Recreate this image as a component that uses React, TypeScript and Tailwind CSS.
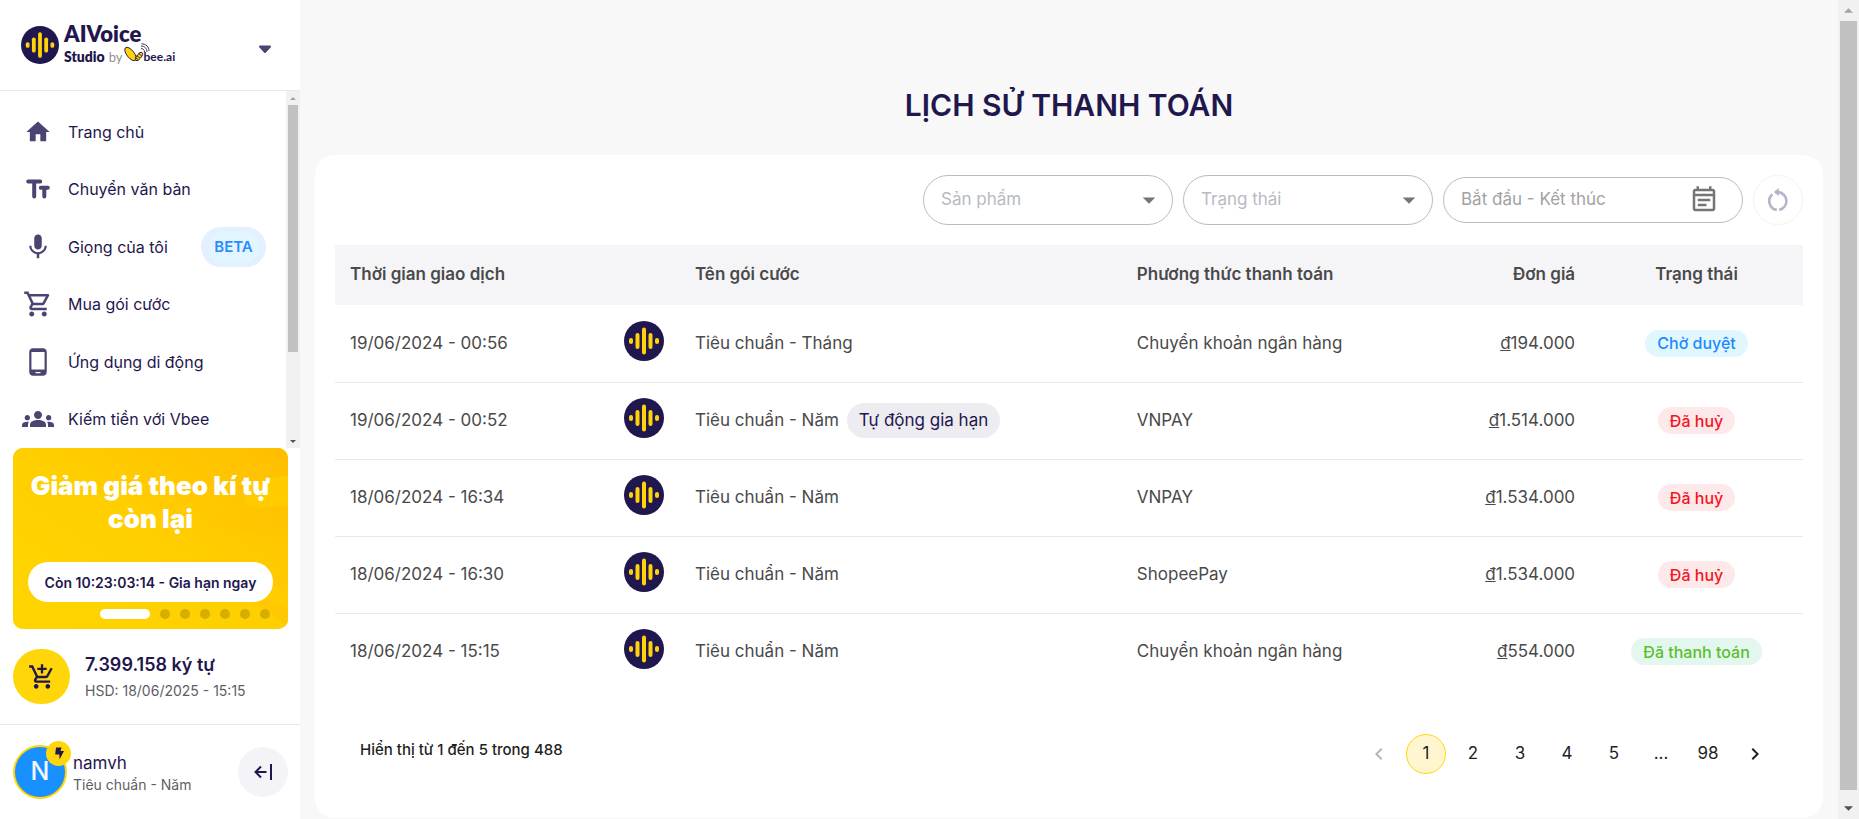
import React from 'react';
import {
  MdHome, MdMic, MdOutlineShoppingCart, MdPhoneAndroid, MdGroups, MdArrowDropDown,
  MdOutlineEventNote, MdChevronLeft, MdChevronRight, MdOutlineAddShoppingCart,
} from 'react-icons/md';

const SoundBadge = ({ className }: { className: string }) => (
  <svg viewBox="0 0 40 40" className={className} aria-hidden="true">
    <circle cx="20" cy="20" r="20" fill="#1f174e" />
    <g fill="#ffd20a">
      <rect x="5" y="17" width="4" height="6" rx="2" />
      <rect x="11.5" y="12" width="4" height="16" rx="2" />
      <rect x="18" y="6.5" width="4" height="27" rx="2" />
      <rect x="24.5" y="12" width="4" height="16" rx="2" />
      <rect x="31" y="17" width="4" height="6" rx="2" />
    </g>
  </svg>
);

const TextIcon = () => (
  <svg viewBox="0 0 24 20" className="h-5 w-6" fill="none" stroke="currentColor" strokeWidth="4" strokeLinecap="round" strokeLinejoin="round" aria-hidden="true">
    <path d="M2.200 2.500h12M8.200 2.500v15M14.800 8.800h7M18.300 8.800v8.700" />
  </svg>
);

const BeeMark = () => (
  <svg viewBox="0 0 26 20" className="mb-2 ml-px h-5 w-[26px] shrink-0" aria-hidden="true">
    <ellipse cx="6.5" cy="11" rx="3.7" ry="8" transform="rotate(-38 6.5 11)" fill="#ffd20a" stroke="#1f174e" strokeWidth=".9" />
    <ellipse cx="15" cy="13.500" rx="2.2" ry="5" transform="rotate(38 15 13.5)" fill="#ffd20a" stroke="#1f174e" strokeWidth=".9" />
    <path d="M14.5 10.500l3 2.200M12.700 12.600l3 2.200M11.500 14.700l2.600 1.900" stroke="#1f174e" strokeWidth=".9" />
    <path d="M17 5.500c2 0 3.500 1.500 3.500 3.500M17 3c3.500 0 6 2.500 6 6M17.500 .8C22 .8 25 4 25 8" fill="none" stroke="#1f174e" strokeWidth=".9" />
  </svg>
);

const menu = [
  { label: 'Trang chủ', icon: <MdHome className="size-7" /> },
  { label: 'Chuyển văn bản', icon: <TextIcon /> },
  { label: 'Giọng của tôi', icon: <MdMic className="size-[30px]" />, beta: true },
  { label: 'Mua gói cước', icon: <MdOutlineShoppingCart className="size-[30px]" /> },
  { label: 'Ứng dụng di động', icon: <MdPhoneAndroid className="size-[30px]" /> },
  { label: 'Kiếm tiền với Vbee', icon: <MdGroups className="size-8" /> },
];

const pending = 'bg-[#e0f8fd] text-[#1e88ff]';
const cancelled = 'bg-[#fde9ea] text-[#f5141d]';
const paid = 'bg-[#e4f7ee] text-[#58bf2d]';

const rows = [
  { time: '19/06/2024 - 00:56', plan: 'Tiêu chuẩn - Tháng', renew: false, method: 'Chuyển khoản ngân hàng', price: '194.000', status: 'Chờ duyệt', tone: pending },
  { time: '19/06/2024 - 00:52', plan: 'Tiêu chuẩn - Năm', renew: true, method: 'VNPAY', price: '1.514.000', status: 'Đã huỷ', tone: cancelled },
  { time: '18/06/2024 - 16:34', plan: 'Tiêu chuẩn - Năm', renew: false, method: 'VNPAY', price: '1.534.000', status: 'Đã huỷ', tone: cancelled },
  { time: '18/06/2024 - 16:30', plan: 'Tiêu chuẩn - Năm', renew: false, method: 'ShopeePay', price: '1.534.000', status: 'Đã huỷ', tone: cancelled },
  { time: '18/06/2024 - 15:15', plan: 'Tiêu chuẩn - Năm', renew: false, method: 'Chuyển khoản ngân hàng', price: '554.000', status: 'Đã thanh toán', tone: paid },
];

const Arrow = ({ down, className }: { down?: boolean; className: string }) => (
  <svg viewBox="0 0 10 5" className={className} fill="currentColor" aria-hidden="true">
    <path d={down ? 'M0 0h10L5 5z' : 'M0 5h10L5 0z'} />
  </svg>
);

function Sidebar() {
  return (
    <aside className="flex w-[300px] shrink-0 flex-col bg-white text-[#1f174e]">
      <div className="flex h-[91px] shrink-0 items-center justify-between border-b border-[#e9e9ec] pr-[28px] pl-[21px]">
        <a href="#" className="flex items-center gap-[5px]" aria-label="AIVoice Studio by Vbee.ai">
          <SoundBadge className="size-[38px]" />
          <span className="flex flex-col gap-1 font-['Lato','Liberation_Sans',sans-serif]">
            <span className="text-[22px] leading-[20px] font-extrabold">AIVoice</span>
            <span className="flex h-[18px] items-center text-[14px] leading-[18px] font-extrabold whitespace-nowrap">
              Studio
              <span className="ml-1 text-[13px] font-normal text-[#8f8f96]">by</span>
              <BeeMark />
              <span className="-ml-1.5 text-[12px] font-bold">bee.ai</span>
            </span>
          </span>
        </a>
        <button type="button" aria-label="Chọn sản phẩm" className="mt-2 text-[#4b4472]">
          <svg viewBox="0 0 14 9" className="h-[9px] w-[14px]" fill="currentColor" stroke="currentColor" strokeWidth="2" strokeLinejoin="round" aria-hidden="true"><path d="M2 1.500h10L7 7z" /></svg>
        </button>
      </div>

      <div className="flex min-h-0 flex-1">
        <nav className="flex min-w-0 flex-1 flex-col pt-3">
          {menu.map((m) => (
            <a key={m.label} href="#" className="flex min-h-12 flex-1 items-center pl-[22px]">
              <span className="flex w-8 justify-center text-[#4b4472]">{m.icon}</span>
              <span className="ml-[14px] text-[16px] whitespace-nowrap">{m.label}</span>
              {m.beta && (
                <span className="mr-5 ml-auto flex h-10 w-[65px] items-center justify-center rounded-full bg-[#e3f0ff] text-[15px] font-semibold text-[#2a8cff]">
                  <span className="flex h-8 w-[50px] items-center justify-center rounded-full bg-[#e3f6ff]">BETA</span>
                </span>
              )}
            </a>
          ))}
        </nav>
        <div className="flex w-[14px] flex-col items-center bg-[#f1f1f1]">
          <div className="flex h-[14px] items-center"><Arrow className="h-[3px] w-[6px] text-[#a3a3a3]" /></div>
          <div className="h-[247px] w-[10px] bg-[#c1c1c1]" />
          <div className="mt-auto flex h-[14px] items-center"><Arrow down className="h-[3px] w-[6px] text-[#505050]" /></div>
        </div>
      </div>

      <section className="relative mr-3 ml-[13px] flex h-[181px] shrink-0 flex-col items-center overflow-hidden rounded-[10px] bg-[#ffd000]">
        <svg viewBox="0 0 275 181" preserveAspectRatio="none" className="absolute inset-0 size-full" aria-hidden="true">
          <defs>
            <linearGradient id="warm" x1="0" y1="1" x2="1" y2="0">
              <stop offset="0" stopColor="#ffd500" /><stop offset=".5" stopColor="#ffcf00" /><stop offset="1" stopColor="#ffbe00" />
            </linearGradient>
            <linearGradient id="glow" x1="0" y1="0" x2="1" y2="0">
              <stop offset="0" stopColor="#ffc200" stopOpacity="0" /><stop offset="1" stopColor="#ffc200" />
            </linearGradient>
          </defs>
          <path d="M0 0h275v181H0z" fill="url(#warm)" />
          <path d="M275 27c-20 4-44 6-44 20 0 14 12 15 44 9z" fill="#ffcc00" />
          <path d="M180 60c30 24 60 28 95 28V56c-30 8-60 10-95 4z" fill="url(#glow)" opacity=".6" />
          <path d="M275 126c-26 4-42 8-60 14 20 2 40 0 60-4zM215 150c24 4 44 10 60 31v-20c-14-10-34-14-60-11z" fill="#ffc600" opacity=".7" />
        </svg>
        <h2 className="relative mt-[21px] px-3 text-center text-[26px] leading-[33px] font-black text-white">Giảm giá theo kí tự còn lại</h2>
        <button type="button" className="relative mt-[27px] h-10 w-[245px] rounded-full bg-white text-[14px] font-semibold whitespace-nowrap">Còn 10:23:03:14 - Gia hạn ngay</button>
        <div className="relative mt-[7px] mr-[18px] flex gap-[10px] self-end">
          <span className="h-[10px] w-[50px] rounded-full bg-white" />
          {[1, 2, 3, 4, 5, 6].map((n) => <span key={n} className="size-[10px] rounded-full bg-[#d6ae00]" />)}
        </div>
      </section>

      <div className="flex h-24 shrink-0 items-center border-b border-[#e9e9ec] pl-[13px]">
        <button type="button" aria-label="Mua thêm ký tự" className="flex h-[55px] w-[57px] items-center justify-center rounded-full bg-[#ffd60a]">
          <MdOutlineAddShoppingCart className="size-7" />
        </button>
        <div className="ml-[15px]">
          <div className="text-[18px] leading-7 font-semibold">7.399.158 ký tự</div>
          <div className="text-[14px] leading-6 text-[#5e5e66]">HSD: 18/06/2025 - 15:15</div>
        </div>
      </div>

      <div className="flex h-[94px] shrink-0 items-center pr-3 pl-[13px]">
        <div className="relative flex size-[54px] items-center justify-center rounded-full border-2 border-[#ffd60a] bg-[#1890ff] text-[25px] font-medium text-[#f4f6ff]">
          N
          <span className="absolute -top-1.5 -right-1.5 flex size-[25px] items-center justify-center rounded-full bg-[#ffd60a] text-[#1f174e]">
            <svg viewBox="0 0 10 13" className="h-[13px] w-[10px]" fill="currentColor" aria-hidden="true"><path d="M2 .5h5.500L6.500 4H10L5.500 12.500 5.300 7.500H1.200z" /></svg>
          </span>
        </div>
        <div className="ml-[6px] pt-1">
          <div className="text-[17px] leading-[22px]">namvh</div>
          <div className="text-[14px] leading-[22px] text-[#5e5e66]">Tiêu chuẩn - Năm</div>
        </div>
        <button type="button" aria-label="Thu gọn" className="ml-auto flex size-[50px] items-center justify-center rounded-full bg-[#f4f4f8]">
          <svg viewBox="0 0 20 16" className="h-4 w-5" fill="none" stroke="currentColor" strokeWidth="2" aria-hidden="true"><path d="M13.500 8H2.500M8 2.500L2.500 8 8 13.500M18 0v16" /></svg>
        </button>
      </div>
    </aside>
  );
}

const Filter = ({ label }: { label: string }) => (
  <label className="relative flex">
    <select aria-label={label} className="h-[50px] w-[250px] appearance-none rounded-full border border-[#b9bcc6] bg-white px-[17px] text-[17px] text-[#b7bac3]">
      <option>{label}</option>
    </select>
    <MdArrowDropDown className="pointer-events-none absolute top-[10px] right-[9px] size-[30px] text-[#757575]" />
  </label>
);

export default function App() {
  return (
    <div className="flex h-screen min-h-[760px] bg-[#f8f8f8] font-['Inter','Liberation_Sans',sans-serif]">
      <Sidebar />
      <main className="flex min-w-0 flex-1 flex-col px-[15px] pb-px">
        <h1 className="mt-[83px] text-center text-[30px] leading-[44px] font-semibold text-[#1f174e]">LỊCH SỬ THANH TOÁN</h1>
        <section className="mt-7 flex flex-1 flex-col rounded-[20px] bg-white px-5 pt-5">
          <div className="flex items-center justify-end gap-[10px]">
            <Filter label="Sản phẩm" />
            <Filter label="Trạng thái" />
            <div className="flex h-[46px] w-[300px] items-center rounded-full border border-[#b9bcc6] pr-[23px] pl-[17px]">
              <input aria-label="Khoảng thời gian" placeholder="Bắt đầu - Kết thúc" className="min-w-0 flex-1 bg-transparent text-[17px] placeholder:text-[#a2a2a2]" />
              <MdOutlineEventNote className="size-[30px] text-[#757575]" />
            </div>
            <button type="button" aria-label="Đặt lại" className="flex size-[50px] items-center justify-center rounded-full border border-[#f3f3f5] text-[#b6b3cb]">
              <svg viewBox="0 0 24 24" className="size-6" fill="none" stroke="currentColor" strokeWidth="2.6" aria-hidden="true">
                <path d="M10.800 21.900A9 9 0 0 1 6.300 6.300M13.200 21.900A9 9 0 0 0 12 4.100H9" /><path d="M12.800 0v8.200L7.800 4.100z" fill="currentColor" stroke="none" />
              </svg>
            </button>
          </div>

          <table className="mt-5 w-full table-fixed text-[17px] text-[#4a4a4a]">
            <colgroup>
              <col className="w-[18.5%]" /><col className="w-[5%]" /><col className="w-[30.1%]" /><col className="w-[21%]" /><col className="w-[10.9%]" /><col />
            </colgroup>
            <thead className="bg-[#f5f5f8]">
              <tr className="h-[60px] [&>th]:px-[15px] [&>th]:font-semibold">
                <th className="text-left">Thời gian giao dịch</th>
                <th aria-label="Biểu tượng" />
                <th className="text-left">Tên gói cước</th>
                <th className="text-left">Phương thức thanh toán</th>
                <th className="text-right">Đơn giá</th>
                <th className="text-center">Trạng thái</th>
              </tr>
            </thead>
            <tbody>
              {rows.map((r) => (
                <tr key={r.time} className="h-[77px] border-b border-[#e9e9ec] last:border-b-0 [&>td]:px-[15px]">
                  <td>{r.time}</td>
                  <td><SoundBadge className="mb-[5px] ml-[2px] size-10 max-w-none" /></td>
                  <td className="whitespace-nowrap">
                    <span className="flex items-center gap-2">
                      {r.plan}
                      {r.renew && <span className="flex h-[35px] items-center rounded-full bg-[#ececf1] px-3 text-[#1f174e]">Tự động gia hạn</span>}
                    </span>
                  </td>
                  <td>{r.method}</td>
                  <td className="text-right"><span className="underline">đ</span>{r.price}</td>
                  <td className="text-center"><span className={`inline-flex h-[27px] items-center rounded-full px-3 align-middle text-[16px] font-medium whitespace-nowrap ${r.tone}`}>{r.status}</span></td>
                </tr>
              ))}
            </tbody>
          </table>

          <div className="mt-11 flex items-center justify-between pr-[28px] pl-[25px]">
            <p className="mb-2 text-[15px] font-medium text-[#1f1f1f]">Hiển thị từ 1 đến 5 trong 488</p>
            <nav aria-label="Phân trang" className="flex items-center gap-[7px] text-[17px] text-[#1f1f1f] [&>*]:flex [&>*]:h-10 [&>*]:w-10 [&>*]:items-center [&>*]:justify-center">
              <button type="button" disabled aria-label="Trang trước" className="text-[#b5b5b5]"><MdChevronLeft className="size-6" stroke="currentColor" /></button>
              <button type="button" aria-current="page" className="rounded-full border border-[#ffd60a] bg-[#fff6cf]">1</button>
              <button type="button">2</button>
              <button type="button">3</button>
              <button type="button">4</button>
              <button type="button">5</button>
              <span>...</span>
              <button type="button">98</button>
              <button type="button" aria-label="Trang sau"><MdChevronRight className="size-6" stroke="currentColor" /></button>
            </nav>
          </div>
        </section>
      </main>
      <div className="flex w-[21px] shrink-0 flex-col items-center bg-[#f1f1f1]">
        <div className="flex h-[21px] items-center"><Arrow className="h-[5px] w-[9px] text-[#a3a3a3]" /></div>
        <div className="mb-2 w-[17px] flex-1 bg-[#c1c1c1]" />
        <div className="flex h-[21px] items-center"><Arrow down className="h-[5px] w-[9px] text-[#505050]" /></div>
      </div>
    </div>
  );
}
